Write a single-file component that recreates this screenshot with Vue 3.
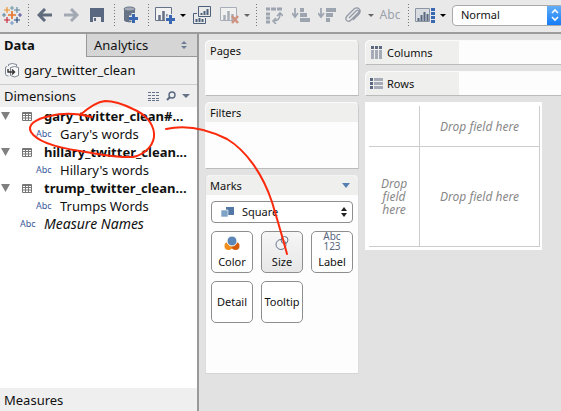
<script setup>
import { ref } from 'vue'

const view = ref('Normal')
const mark = ref('Square')
const tables = [
  { name: 'gary_twitter_clean#...', field: "Gary's words" },
  { name: 'hillary_twitter_clean...', field: "Hillary's words" },
  { name: 'trump_twitter_clean...', field: 'Trumps Words' },
]
const sparks = [
  [13, 12, 4, '#e8762c'], [8, 7, 3, '#eb9129'], [18, 7, 3, '#5b879b'],
  [8, 17, 3, '#c72035'], [18, 17, 3, '#1f457e'], [13, 5, 2, '#7099a6'],
  [13, 20, 2, '#7099c6'], [5, 12, 2, '#5b879b'], [21, 12, 2, '#59539b'],
]
</script>

<template>
  <div class="app">
    <header class="toolbar">
      <button class="tool logo" aria-label="Start page">
        <svg width="24" height="24" viewBox="1 0 24 24">
          <path v-for="(s, i) in sparks" :key="i" :stroke="s[3]" :stroke-width="s[2] > 3 ? 1.7 : 1.1"
            :d="`M${s[0] - s[2]} ${s[1]}h${s[2] * 2}M${s[0]} ${s[1] - s[2]}v${s[2] * 2}`" />
        </svg>
      </button>
      <i class="sep"></i>
      <button class="tool" aria-label="Undo">
        <svg width="16" height="14" viewBox="0 0 16 14"><path d="M8 1 2 7l6 6M2 7h13" fill="none" stroke="#606b7d" stroke-width="3" /></svg>
      </button>
      <button class="tool" aria-label="Redo">
        <svg width="16" height="14" viewBox="0 0 16 14"><path d="m8 1 6 6-6 6M14 7H1" fill="none" stroke="#a3a9b3" stroke-width="3" /></svg>
      </button>
      <button class="tool" aria-label="Save">
        <svg width="14" height="14" viewBox="0 0 14 14"><path d="M0 0h14v14H0z" fill="#596880" /><path d="M3 9h8v5H3z" fill="#e9e9e9" /><path d="M4 10h2v3H4z" fill="#596880" /></svg>
      </button>
      <i class="sep"></i>
      <button class="tool" aria-label="New data source">
        <svg width="16" height="18" viewBox="0 0 16 18"><path d="M1 3v11c0 3 11 3 11 0V3z" fill="#667286" /><ellipse cx="6.500" cy="3" rx="5.500" ry="2" fill="#a4abb6" stroke="#667286" /><path d="M6 12h10M11 7v10" stroke="#e9e9e9" stroke-width="5" /><path d="M6 12.500h9M10.500 8v9" stroke="#3a67b1" stroke-width="3" /></svg>
      </button>
      <i class="sep"></i>
      <button class="tool" aria-label="New worksheet">
        <svg width="20" height="18" viewBox="0 0 20 18"><path d="M.5 1.500h16v13H.5z" fill="#f2f2f2" stroke="#657287" /><path d="M4.500 14V9M8.500 14V5M12.500 14V8" stroke="#657287" stroke-width="2.500" /><path d="M10 13h10M15 8v10" stroke="#e9e9e9" stroke-width="5" /><path d="M11 13.500h9M15.500 9v9" stroke="#3a67b1" stroke-width="3" /></svg>
      </button>
      <button class="caret" aria-label="New worksheet options"></button>
      <button class="tool wide" aria-label="Duplicate sheet">
        <svg width="18" height="18" viewBox="0 0 18 18"><path d="M5.500 .5h12v10h-12zM4 7.500H.5v10h12V12" fill="none" stroke="#4f607a" /><path d="M8.500 9V7M11.500 9V5M14.500 9V3M3.500 16v-3M6.500 16v-4M9.500 16v-3" stroke="#4f607a" stroke-width="2" /></svg>
      </button>
      <button class="tool" aria-label="Clear sheet">
        <svg width="19" height="18" viewBox="0 0 19 18"><path d="M.5 1.500h16v13H.5z" fill="#f0f0f0" stroke="#a8aeb8" /><path d="M4.500 14V9M8.500 14V5M12.500 14V8" stroke="#a8aeb8" stroke-width="2.500" /><path d="m12 10 6 7m0-7-6 7" stroke="#cf9280" stroke-width="2.500" /></svg>
      </button>
      <button class="caret dim" aria-label="Clear options"></button>
      <i class="sep"></i>
      <button class="tool wide" aria-label="Swap rows and columns">
        <svg width="17" height="17" viewBox="0 0 17 17"><path d="M0 2h4M5 2h5M11 2h5M0 7h4M0 11h4M0 15h4" stroke="#9ca4b0" stroke-width="3" /><path d="M7 14q7 0 7-7M11 9l3-3 3 3M10 11l-3 3 3 3" fill="none" stroke="#9ca4b0" stroke-width="1.600" /></svg>
      </button>
      <button class="tool" aria-label="Sort ascending">
        <svg width="18" height="15" viewBox="0 0 18 15"><path d="M3 0v8M0 5l3 4 3-4" fill="none" stroke="#9ca4b0" stroke-width="1.700" /><path d="M8 2h4M8 7h7M8 12h10" stroke="#9ca4b0" stroke-width="4" /></svg>
      </button>
      <button class="tool" aria-label="Sort descending">
        <svg width="18" height="15" viewBox="0 0 18 15"><path d="M3 0v8M0 5l3 4 3-4" fill="none" stroke="#9ca4b0" stroke-width="1.700" /><path d="M8 2h10M8 7h7M8 12h4" stroke="#9ca4b0" stroke-width="4" /></svg>
      </button>
      <button class="tool" aria-label="Group members">
        <svg width="17" height="17" viewBox="0 0 17 17"><path d="m4 11 7-7c2-2 4 0 2 2l-7 7c-3 3-7 0-4-4l7-7c4-3 8 1 5 5l-6 6" fill="none" stroke="#9299a5" stroke-width="1.300" /></svg>
      </button>
      <button class="caret dim" aria-label="Group options"></button>
      <button class="tool wide abc">Abc</button>
      <i class="sep"></i>
      <button class="tool" aria-label="Show cards">
        <svg width="20" height="15" viewBox="0 0 20 15"><path d="M.5 .5h14v13H.5z" fill="#d9dce1" stroke="#8b95a3" /><path d="M3.500 13v-3M6.500 13V7M9.500 13V4M12.500 13V6" stroke="#596880" stroke-width="2" /><path d="M18 0v15" stroke="#3a67b1" stroke-width="4" stroke-dasharray="3 1" /></svg>
      </button>
      <button class="caret" aria-label="Card options"></button>
      <div class="view">
        <select v-model="view" aria-label="Fit"><option>Normal</option><option>Entire View</option></select>
        <span class="stepper"><svg width="10" height="14" viewBox="0 0 10 14"><path d="m2 5 3-3 3 3M2 9l3 3 3-3" fill="none" stroke="#fff" stroke-width="1.600" /></svg></span>
      </div>
    </header>

    <div class="body">
      <aside class="side">
        <nav class="tabs">
          <button class="tab active">Data</button>
          <button class="tab">Analytics
            <svg width="6" height="8" viewBox="0 0 6 8"><path d="M0 3h6L3 0zM0 5h6L3 8z" fill="#6f7f95" /></svg>
          </button>
        </nav>
        <div class="source">
          <svg width="15" height="15" viewBox="0 0 15 15"><path d="M3.500 3V1.500Q7-.5 11.500 1.500v2M2 3.500Q.5 3.500.5 5v6q0 2 3 2M5.500 4.500q4-2 8 0v8q-4 3-8 0z" fill="#fafafa" stroke="#7c8593" /><path d="M3 6v3h6M7 6.500 9.500 9 7 11.500" fill="none" stroke="#333" stroke-width="1.400" /></svg>
          <span>gary_twitter_clean</span>
        </div>
        <div class="section">
          <h2>Dimensions</h2>
          <svg width="12" height="9" viewBox="0 0 12 9"><path d="M0 .5h12M0 3.500h12M0 6.500h12M0 8.500h12" stroke="#657287" stroke-dasharray="3 1" /></svg>
          <svg width="10" height="10" viewBox="0 0 10 10"><circle cx="6" cy="4" r="3" fill="none" stroke="#596880" stroke-width="1.400" /><path d="M4 6 1 9" stroke="#596880" stroke-width="2" /></svg>
          <svg width="8" height="5" viewBox="0 0 8 5"><path d="M0 0h8L4 4z" fill="#657287" /></svg>
        </div>
        <ul class="fields">
          <template v-for="t in tables" :key="t.name">
            <li class="group">
              <svg width="10" height="8" viewBox="0 0 10 8"><path d="M1 0h9L5.500 8z" fill="#808080" /></svg>
              <svg width="10" height="9" viewBox="0 0 10 9"><path d="M.5 .5h9v8h-9zM0 3.500h10M0 6h10M3.500 2v7M6.500 2v7M0 1.500h10" fill="none" stroke="#777" /></svg>
              <b>{{ t.name }}</b>
            </li>
            <li class="field"><i class="type">Abc</i><span>{{ t.field }}</span></li>
          </template>
          <li class="field top"><i class="type">Abc</i><em>Measure Names</em></li>
        </ul>
        <div class="section measures"><h2>Measures</h2></div>
      </aside>

      <main class="work">
        <div class="cards">
          <section class="card pages"><h3>Pages</h3></section>
          <section class="card filters"><h3>Filters</h3></section>
          <section class="card marks">
            <h3>Marks <svg width="8" height="5" viewBox="0 0 8 5"><path d="M0 0h8L4 5z" fill="#5680b2" /></svg></h3>
            <div class="mark-body">
              <div class="mark-type">
                <svg width="13" height="10" viewBox="0 0 13 10"><path d="M5 0h8v8H5z" fill="#5478a5" /><path d="M0 3h7v7H0z" fill="#7fa3c7" stroke="#fff" stroke-width=".6" /></svg>
                <select v-model="mark" aria-label="Mark type"><option>Square</option><option>Circle</option></select>
                <svg width="6" height="10" viewBox="0 0 6 10"><path d="M0 4h6L3 0zM0 6h6l-3 4z" fill="#222" /></svg>
              </div>
              <div class="mark-grid">
                <button class="mark">
                  <svg width="16" height="15" viewBox="0 0 16 15"><circle cx="4.500" cy="10" r="4" fill="#f28e1c" /><circle cx="11.500" cy="10" r="4" fill="#d45b07" /><circle cx="8" cy="5" r="5" fill="#5b86b5" stroke="#fff" /></svg>
                  Color
                </button>
                <button class="mark pressed">
                  <svg width="14" height="15" viewBox="0 0 14 15"><circle cx="6" cy="8.500" r="5" fill="none" stroke="#657287" /><circle cx="9.500" cy="4" r="3.500" fill="none" stroke="#657287" /></svg>
                  Size
                </button>
                <button class="mark"><span class="glyph">Abc<br>123</span>Label</button>
                <button class="mark plain">Detail</button>
                <button class="mark plain">Tooltip</button>
              </div>
            </div>
          </section>
        </div>

        <div class="sheet">
          <div class="shelf"><span class="shelf-name">
            <svg width="13" height="13" viewBox="0 0 13 13"><path d="M2.500 0v3M6.500 0v3M10.500 0v3" stroke="#5c6980" stroke-width="3" /><path d="M2.500 4v9M6.500 4v9M10.500 4v9" stroke="#a5acb8" stroke-width="3" /></svg>Columns</span></div>
          <div class="shelf"><span class="shelf-name">
            <svg width="13" height="12" viewBox="0 0 13 12"><path d="M0 1.500h3M0 5.500h3M0 9.500h3" stroke="#5c6980" stroke-width="3" /><path d="M4 1.500h9M4 5.500h9M4 9.500h9" stroke="#a5acb8" stroke-width="3" /></svg>Rows</span></div>
          <div class="canvas">
            <div class="drop"></div>
            <div class="drop">Drop field here</div>
            <div class="drop">Drop field here</div>
            <div class="drop">Drop field here</div>
          </div>
        </div>
      </main>
    </div>

    <svg class="ink" width="561" height="411" viewBox="0 0 561 411">
      <path d="M92 117C76 113 62 113 50 116C35 119 27 125 31 132C37 142 60 148 80 151C105 155 118 158 133 157C147 154 155 143 154 133C153 123 145 114 133 109C123 104 114 101 105 101C96 102 88 108 80 115" />
      <path d="M166 129C184 125 203 127 227 139C247 151 263 175 272 202C278 222 283 239 287 254" />
    </svg>
  </div>
</template>

<style>
body { margin: 0; background: #e2e2e2; }
</style>

<style scoped>
* { box-sizing: border-box; }
.app {
  position: relative;
  display: flex;
  flex-direction: column;
  min-height: 100vh;
  overflow: hidden;
  color: #111;
  background: #e2e2e2;
  font: 13px/18px "Noto Sans", "Open Sans", sans-serif;
}
button, select { margin: 0; padding: 0; border: 0; background: none; color: inherit; font: inherit; }
h2, h3 { margin: 0; font: inherit; }
svg { flex: none; display: block; }

.toolbar {
  display: flex;
  align-items: center;
  height: 34px;
  padding: 0 0 2px;
  background: #e9e9e9;
  border-bottom: 2px solid #9c9c9c;
}
.tool { flex: none; width: 26px; height: 24px; display: flex; align-items: center; justify-content: center; }
.tool.logo { width: 24px; }
.tool.wide { width: 28px; }
.tool.abc { color: #9ba1ab; font-size: 12px; }
.sep { flex: none; width: 8px; height: 22px; background: repeating-linear-gradient(#777 0 1px, transparent 1px 3px) center / 1px 100% no-repeat; }
.caret { flex: none; width: 10px; height: 24px; display: flex; align-items: center; justify-content: center; }
.caret::after { content: ""; border: 3px solid transparent; border-top-color: #000; border-bottom: 0; }
.caret.dim::after { border-top-color: #666; }
.view { flex: 1 0 112px; display: flex; height: 21px; margin-left: 4px; overflow: hidden; background: #fff; border: 1px solid #aaa; border-radius: 4px; }
.view select { flex: 1; appearance: none; padding-left: 8px; font-size: 11px; }
.stepper { width: 16px; display: grid; place-items: center; background: linear-gradient(#62aef8, #147cf6); }

.body { flex: 1; display: flex; }
.side { flex: none; width: 199px; display: flex; flex-direction: column; background: #fff; border-right: 2px solid #999; }
.tabs { display: flex; height: 23px; background: #f0f0f0; }
.tab { flex: 1; display: flex; align-items: center; justify-content: space-between; padding: 0 10px 0 7px; background: #d5d5d5; border: solid #999; border-width: 0 0 1px 1px; }
.tab.active { flex: none; width: 86px; padding: 0 0 1px 4px; background: #f0f0f0; border: 0; font-weight: bold; }
.source { display: flex; align-items: center; gap: 4px; height: 28px; padding: 0 0 1px 5px; background: #f0f0f0; border-bottom: 1px solid #ccc; }
.section { display: flex; align-items: center; gap: 6px; height: 22px; padding: 0 7px 0 4px; background: #efefef; }
.section h2 { flex: 1; }
.fields { flex: 1; margin: 0; padding: 0; list-style: none; }
.fields li { display: flex; align-items: center; height: 18px; white-space: nowrap; }
.group { gap: 12px; }
.type { width: 24px; color: #37599a; font-size: 9px; font-style: normal; }
.field { padding-left: 36px; }
.field.top { padding-left: 20px; font-size: 14px; }
.measures { height: 23px; }

.work { flex: 1; display: flex; gap: 6px; padding: 6px 0 0 6px; font-size: 11px; }
.cards { flex: none; width: 154px; display: flex; flex-direction: column; gap: 6px; }
.card { background: #fdfdfd; border: 1px solid #fafafa; border-right-color: #ccc; border-bottom: 1px solid #bbb; border-radius: 5px 5px 0 0; }
.card h3 { display: flex; align-items: center; justify-content: space-between; height: 19px; padding: 0 8px 0 4px; background: #efefed; border-radius: 5px 5px 0 0; }
.pages { height: 56px; }
.filters { height: 67px; }
.marks { height: 199px; border-color: #f4f4f4 #ddd #d5d5d5; }
.mark-body { padding: 6px 5px; }
.mark-type { display: flex; align-items: center; gap: 8px; height: 22px; padding: 0 5px 0 9px; background: #fff; border: 1px solid #8e8e8e; border-radius: 4px; }
.mark-type select { flex: 1; appearance: none; }
.mark-grid { display: grid; grid-template-columns: repeat(3, 42px); justify-content: space-between; gap: 8px; padding-top: 8px; }
.mark { display: flex; flex-direction: column; align-items: center; justify-content: flex-end; gap: 2px; height: 42px; padding-bottom: 1px; background: #fff; border: 1px solid #8e8e8e; border-radius: 5px; line-height: 18px; white-space: nowrap; }
.mark.pressed { background: linear-gradient(#f6f6f6, #e7e7e7); }
.mark.plain { justify-content: center; }
.glyph { color: #56657d; font-size: 10px; line-height: 10px; }

.sheet { flex: 1; min-width: 0; display: flex; flex-direction: column; gap: 6px; }
.shelf { display: flex; height: 25px; background: #fdfdfd; border: solid #fafafa; border-width: 1px 0 0 1px; border-bottom: 1px solid #bbb; border-radius: 5px 0 0 0; }
.shelf-name { width: 93px; display: flex; align-items: center; gap: 4px; padding-left: 4px; background: #efefed; border-radius: 5px 0 0 0; }
.canvas { align-self: flex-start; display: grid; grid-template: 41px 100px / 51px 120px; padding: 4px 2px 3px 4px; background: #fff; }
.drop { display: grid; place-items: center; padding: 0 6px; border: solid #ccc; border-width: 0 1px 1px 0; color: #888; font-size: 12px; font-style: italic; line-height: 13px; text-align: center; }

.ink { position: absolute; top: 0; left: 0; pointer-events: none; }
.ink path { fill: none; stroke: #fb2a0c; stroke-width: 2; stroke-linecap: round; }
</style>
